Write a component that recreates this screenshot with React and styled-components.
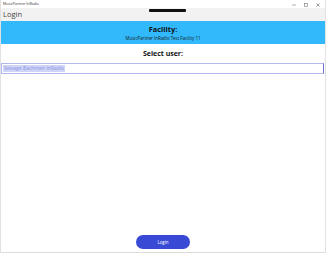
import React from "react";
import styled, { createGlobalStyle } from "styled-components";

const GlobalStyle = createGlobalStyle`
  html, body {
    margin: 0;
    padding: 0;
    background: #ffffff;
  }
  body {
    font-family: "Open Sans", "Noto Sans", "Liberation Sans", sans-serif;
  }
`;

const Window = styled.div`
  width: 326px;
  height: 253px;
  display: flex;
  flex-direction: column;
  background: #ffffff;
  box-sizing: border-box;
  border-left: 1px solid #e2e2e2;
  border-right: 1px solid #e2e2e2;
  overflow: hidden;
`;

const TitleBar = styled.div`
  height: 8px;
  display: flex;
  align-items: center;
  justify-content: space-between;
  padding: 0 5px 0 2px;
  background: #ffffff;
`;

const TitleText = styled.span`
  font-size: 3.6px;
  color: #333;
  line-height: 1;
`;

const Controls = styled.div`
  display: flex;
  align-items: center;
  gap: 8px;
  margin-top: 1px;
`;

const Header = styled.div`
  position: relative;
  height: 13px;
  display: flex;
  align-items: center;
  padding-left: 2px;
  background: #f2f2f2;
`;

const HeaderTitle = styled.span`
  font-size: 7.5px;
  color: #444;
  line-height: 1;
`;

const DragHandle = styled.div`
  position: absolute;
  top: 1px;
  left: 148px;
  width: 37px;
  height: 3px;
  background: #111;
  border-radius: 1px;
`;

const FacilityBand = styled.div`
  height: 23px;
  display: flex;
  flex-direction: column;
  align-items: center;
  justify-content: center;
  background: #31b9fc;
`;

const FacilityLabel = styled.div`
  font-size: 7.4px;
  font-weight: 700;
  color: #111;
  line-height: 9px;
`;

const FacilityName = styled.div`
  font-size: 4.4px;
  color: #1a1a1a;
  line-height: 6px;
  margin-top: 1px;
`;

const SectionTitle = styled.div`
  height: 19px;
  display: flex;
  align-items: center;
  justify-content: center;
  font-size: 7px;
  font-weight: 700;
  color: #111;
`;

const UserField = styled.div`
  height: 11px;
  box-sizing: border-box;
  margin-right: 1px;
  display: flex;
  align-items: center;
  padding-left: 1px;
  border: 1px solid #b3b7f0;
  border-right-color: #6a6ed2;
  background: #ffffff;
`;

const Selected = styled.span`
  font-size: 5px;
  line-height: 7px;
  padding: 0 1px;
  color: #8d97e3;
  background: #cfd5f7;
`;

const Spacer = styled.div`
  flex: 1;
`;

const Footer = styled.div`
  display: flex;
  justify-content: center;
  padding-bottom: 3px;
  border-bottom: 1px solid #dcdcdc;
`;

const LoginButton = styled.button`
  width: 54px;
  height: 14px;
  padding: 0;
  border: none;
  border-radius: 7px;
  background: #3849d6;
  color: #ffffff;
  font-family: inherit;
  font-size: 4.4px;
  line-height: 1;
`;

const App = () => {
  return (
    <>
      <GlobalStyle />
      <Window>
        <TitleBar>
          <TitleText>MusicPartner InRadio</TitleText>
          <Controls>
            <svg width="4" height="4" viewBox="0 0 4 4">
              <line x1="0" y1="2" x2="4" y2="2" stroke="#777" strokeWidth="0.6" />
            </svg>
            <svg width="4" height="4" viewBox="0 0 4 4">
              <rect x="0.4" y="0.4" width="3.2" height="3.2" fill="none" stroke="#777" strokeWidth="0.6" />
            </svg>
            <svg width="4" height="4" viewBox="0 0 4 4">
              <path d="M0.4 0.4 L3.6 3.6 M3.6 0.4 L0.4 3.6" stroke="#555" strokeWidth="0.6" />
            </svg>
          </Controls>
        </TitleBar>
        <Header>
          <HeaderTitle>Login</HeaderTitle>
          <DragHandle />
        </Header>
        <FacilityBand>
          <FacilityLabel>Facility:</FacilityLabel>
          <FacilityName>MusicPartner InRadio Test Facility 11</FacilityName>
        </FacilityBand>
        <SectionTitle>Select user:</SectionTitle>
        <UserField>
          <Selected>Selvage Bachmeir InRadio</Selected>
        </UserField>
        <Spacer />
        <Footer>
          <LoginButton>Login</LoginButton>
        </Footer>
      </Window>
    </>
  );
};

export default App;
